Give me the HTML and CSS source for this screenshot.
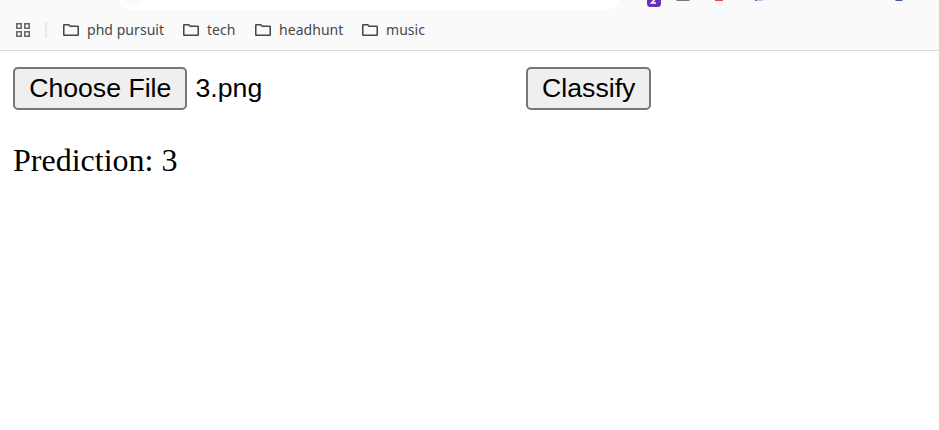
FILE: index.html
```html
<!DOCTYPE html>
<html lang="en">
<head>
<meta charset="utf-8">
<title>Prediction</title>
<link rel="stylesheet" href="styles.css">
</head>
<body>
<header class="chrome">
  <div class="toolbar">
    <div class="address"><span class="site-info"></span></div>
    <svg class="extensions" width="319" height="10" viewBox="0 0 319 10">
      <path d="M27 0H41V3.500Q41 7 37.500 7H30.500Q27 7 27 3.500Z" fill="#6a2fb9"/>
      <path d="M34.500 0L31.500 3H36" fill="none" stroke="#fff" stroke-width="1.500"/>
      <path d="M56 0H70L69 1H57Z" fill="#777"/>
      <path d="M95 0H103V1H95Z" fill="#f04444"/>
      <path d="M135 0H143V1H135Z" fill="#bfc3d3"/>
      <path d="M135 0H137V1H135Z" fill="#5968c0"/>
      <path d="M197 0H199V1H197ZM251 0H253V1H251Z" fill="#e9e9e9"/>
      <path d="M275 0H283L282 1H276Z" fill="#3f579b"/>
    </svg>
  </div>
  <nav class="bookmarks">
    <svg class="apps" width="14" height="14" viewBox="0 0 14 14" fill="none" stroke="#66676b" stroke-width="1.600"><path d="M.8.8h4.400v4.400H.8zM8.800.8h4.400v4.400H8.800zM.8 8.800h4.400v4.400H.8zM8.800 8.800h4.400v4.400H8.800z"/></svg>
    <span class="divider"></span>
    <a class="bookmark phd"><svg class="folder" width="16" height="12" viewBox="0 0 16 12"><path d="M1.500 .75H5.700L7.200 2.250H14.500Q15.250 2.250 15.250 3V10.500Q15.250 11.250 14.500 11.250H1.500Q.75 11.250 .75 10.500V1.500Q.75 .75 1.500 .75Z"/></svg><span>phd pursuit</span></a>
    <a class="bookmark tech"><svg class="folder" width="16" height="12" viewBox="0 0 16 12"><path d="M1.500 .75H5.700L7.200 2.250H14.500Q15.250 2.250 15.250 3V10.500Q15.250 11.250 14.500 11.250H1.500Q.75 11.250 .75 10.500V1.500Q.75 .75 1.500 .75Z"/></svg><span>tech</span></a>
    <a class="bookmark headhunt"><svg class="folder" width="16" height="12" viewBox="0 0 16 12"><path d="M1.500 .75H5.700L7.200 2.250H14.500Q15.250 2.250 15.250 3V10.500Q15.250 11.250 14.500 11.250H1.500Q.75 11.250 .75 10.500V1.500Q.75 .75 1.500 .75Z"/></svg><span>headhunt</span></a>
    <a class="bookmark music"><svg class="folder" width="16" height="12" viewBox="0 0 16 12"><path d="M1.500 .75H5.700L7.200 2.250H14.500Q15.250 2.250 15.250 3V10.500Q15.250 11.250 14.500 11.250H1.500Q.75 11.250 .75 10.500V1.500Q.75 .75 1.500 .75Z"/></svg><span>music</span></a>
  </nav>
</header>
<main class="page">
  <form class="classifier">
    <div class="file-field"><button type="button" class="button choose">Choose File</button><span class="file-name">3.png</span></div>
    <button type="button" class="button classify">Classify</button>
  </form>
  <p class="prediction">Prediction: 3</p>
</main>
</body>
</html>
```
FILE: styles.css
```css
* { box-sizing: border-box; }
body { margin: 0; background: #fff; color: #000; overflow: hidden; }
.chrome { height: 51px; background: #fafafa; border-bottom: 1px solid #dcdcdc; }
.toolbar { display: flex; height: 10px; padding-left: 117px; align-items: flex-end; overflow: hidden; }
.address { display: flex; align-items: flex-end; width: 504px; height: 34px; margin-right: -1px; padding: 0 0 5px 5px; flex: none; border-radius: 17px; background: #fff; }
.site-info { width: 24px; height: 24px; border-radius: 50%; background: #fafafa; }
.extensions { display: block; flex: none; }
.bookmarks { display: flex; align-items: center; height: 40px; padding-left: 16px; font: 14px/20px "Noto Sans", sans-serif; color: #474747; }
.apps { flex: none; }
.divider { width: 2px; height: 16px; margin: 0 16px 0 15px; background: #e8e8e8; }
.bookmark { display: flex; align-items: center; gap: 8px; height: 20px; white-space: nowrap; letter-spacing: 0.05px; }
.phd { width: 120px; }
.tech { width: 72px; }
.headhunt { width: 107px; }
.folder { flex: none; fill: none; stroke: #474747; stroke-width: 1.600; }
.page { padding: 16px 13px; }
.classifier { display: flex; width: 638px; justify-content: space-between; font: 26.667px/30px "Liberation Sans", Arial, sans-serif; }
.file-field { display: flex; align-items: center; gap: 8.5px; }
.file-name { padding-bottom: 2px; }
.button { height: 43px; padding: 0 0 2px 0.5px; border: 2px solid #767676; border-radius: 5px; background: #efefef; color: #000; font: inherit; }
.choose { width: 174px; }
.classify { width: 125px; }
.prediction { margin: 32px 0 0; font: 32px/37px "Liberation Serif", "Times New Roman", serif; }
```
